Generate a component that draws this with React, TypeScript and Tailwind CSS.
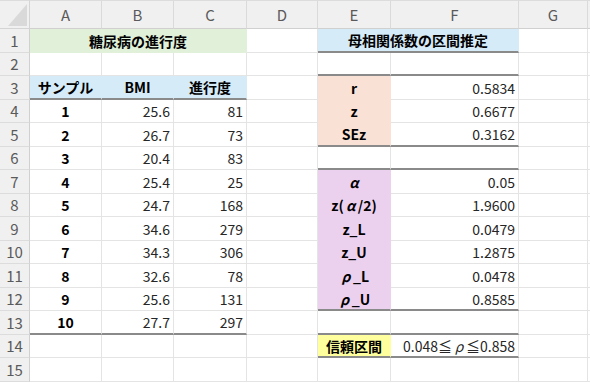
import React from "react"

type CellSpec = {
  text?: string
  span?: number
  fill?: string
  bold?: boolean
  align?: "center" | "right"
  dark?: boolean
}

const fills: Record<string, string> = {
  green: "bg-[#e0f0d9] border-r-[#e0f0d9]",
  blue: "bg-[#d5ebf8] border-r-[#d5ebf8]",
  peach: "bg-[#f9e1d5] border-r-[#f9e1d5]",
  purple: "bg-[#ebd1ee] border-r-[#ebd1ee]",
  yellow: "bg-[#ffff9e] border-r-[#ffff9e]",
}

const cols = ["A", "B", "C", "D", "E", "F", "G"]

const E = {} as CellSpec

const rows: CellSpec[][] = [
  [
    { text: "糖尿病の進行度", span: 3, fill: "green", bold: true, align: "center" },
    E,
    { text: "母相関係数の区間推定", span: 2, fill: "blue", bold: true, align: "center", dark: true },
    E,
  ],
  [E, E, E, E, { dark: true }, { dark: true }, E],
  [
    { text: "サンプル", fill: "blue", bold: true, align: "center", dark: true },
    { text: "BMI", fill: "blue", bold: true, align: "center", dark: true },
    { text: "進行度", fill: "blue", bold: true, align: "center", dark: true },
    E,
    { text: "r", fill: "peach", bold: true, align: "center" },
    { text: "0.5834", align: "right" },
    E,
  ],
]

const samples = [
  ["1", "25.6", "81"],
  ["2", "26.7", "73"],
  ["3", "20.4", "83"],
  ["4", "25.4", "25"],
  ["5", "24.7", "168"],
  ["6", "34.6", "279"],
  ["7", "34.3", "306"],
  ["8", "32.6", "78"],
  ["9", "25.6", "131"],
  ["10", "27.7", "297"],
]

const right: CellSpec[] = [
  { text: "z", fill: "peach", bold: true },
  { text: "SEz", fill: "peach", bold: true, dark: true },
  { dark: true },
  { text: "α", fill: "purple", bold: true },
  { text: "z(α/2)", fill: "purple", bold: true },
  { text: "z_L", fill: "purple", bold: true },
  { text: "z_U", fill: "purple", bold: true },
  { text: "ρ_L", fill: "purple", bold: true },
  { text: "ρ_U", fill: "purple", bold: true, dark: true },
  { dark: true },
]
const rightVals = ["0.6677", "0.3162", "", "0.05", "1.9600", "0.0479", "1.2875", "0.0478", "0.8585", ""]

samples.forEach(([n, bmi, deg], i) => {
  const last = i === samples.length - 1
  const lab = right[i]
  rows.push([
    { text: n, bold: true, align: "center", dark: last },
    { text: bmi, align: "right", dark: last },
    { text: deg, align: "right", dark: last },
    E,
    { ...lab, align: "center" },
    { text: rightVals[i], align: "right", dark: lab.dark },
    E,
  ])
})

rows.push([
  E,
  E,
  E,
  E,
  { text: "信頼区間", fill: "yellow", bold: true, align: "center", dark: true },
  { text: "0.048≦ρ≦0.858", align: "right", dark: true },
  E,
])
rows.push([E, E, E, E, E, E, E])

// greek letters are full width in the sheet's font
function renderText(t: string) {
  return t.split(/([αρ])/).map((part, i) =>
    part === "α" || part === "ρ" ? (
      <span key={i} className="inline-block w-[14px] text-center italic">
        {part}
      </span>
    ) : (
      part
    ),
  )
}

function Cell({ c }: { c: CellSpec }) {
  const fill = c.fill ? fills[c.fill] : "border-r-[#e4e4e4]"
  const bottom = c.dark
    ? "border-b-2 border-b-[#8a8a8a]"
    : c.fill
      ? "border-b border-b-transparent"
      : "border-b border-b-[#e4e4e4]"
  const span = c.span === 3 ? "col-span-3" : c.span === 2 ? "col-span-2" : ""
  const align = c.align === "right" ? "justify-end pr-[3px]" : "justify-center"
  return (
    <div className={`flex items-center border-r ${fill} ${bottom} ${span} ${align}`}>
      {c.text ? (
        <span className={`${c.bold ? "font-bold text-black" : "text-[#262626]"} whitespace-nowrap leading-none pt-[1px]`}>
          {renderText(c.text)}
        </span>
      ) : null}
    </div>
  )
}

export default function App() {
  return (
    <div className="w-[590px] h-[383px] overflow-hidden bg-white font-['Noto_Sans_CJK_JP',sans-serif] text-[14px]">
      <div className="grid w-[620px] grid-cols-[30px_72px_72px_73px_71px_73px_128px_69px_1fr] grid-rows-[29px_repeat(15,23.5px)]">
        {/* column header */}
        <div className="flex items-end justify-end bg-[#f0f0f0] border-r border-b border-[#d4d4d4] border-t border-t-[#dcdcdc] pb-[2px] pr-[1px]">
          <svg width="20" height="22" viewBox="0 0 20 22">
            <polygon points="19,0 19,22 0,22" fill="#d9d9d9" />
          </svg>
        </div>
        {cols.map((c) => (
          <div
            key={c}
            className="flex items-center justify-center bg-[#f0f0f0] border-r border-r-[#dadada] border-b border-b-[#d0d0d0] border-t border-t-[#dcdcdc] text-[15px] text-[#5a5a5a] pt-[2px]"
          >
            {c}
          </div>
        ))}
        <div className="bg-[#f0f0f0] border-b border-b-[#d0d0d0] border-t border-t-[#dcdcdc]" />

        {rows.map((row, i) => (
          <React.Fragment key={i}>
            <div className="flex items-center justify-center bg-[#f0f0f0] border-r border-r-[#d0d0d0] border-b border-b-[#dcdcdc] text-[15px] text-[#5a5a5a] pt-[1px]">
              {i + 1}
            </div>
            {row.map((c, j) => (
              <Cell key={j} c={c} />
            ))}
            <div className="border-b border-b-[#e4e4e4]" />
          </React.Fragment>
        ))}
      </div>
    </div>
  )
}
